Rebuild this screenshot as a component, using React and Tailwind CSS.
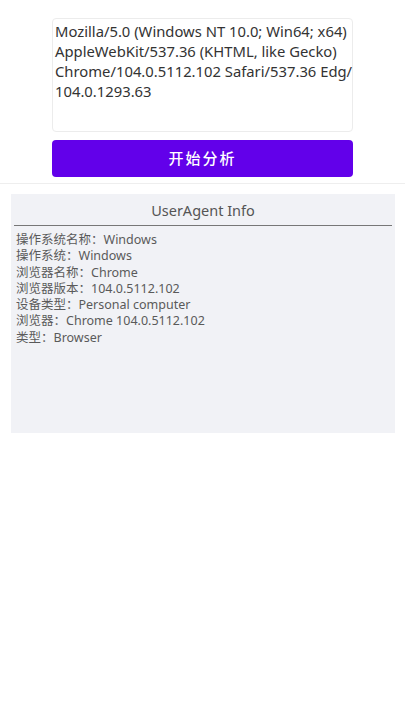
import React from "react";

export default function App() {
  const uaLines = [
    "Mozilla/5.0 (Windows NT 10.0; Win64; x64)",
    "AppleWebKit/537.36 (KHTML, like Gecko)",
    "Chrome/104.0.5112.102 Safari/537.36 Edg/",
    "104.0.1293.63",
  ];
  const rows = [
    "操作系统名称：Windows",
    "操作系统：Windows",
    "浏览器名称：Chrome",
    "浏览器版本：104.0.5112.102",
    "设备类型：Personal computer",
    "浏览器：Chrome 104.0.5112.102",
    "类型：Browser",
  ];
  return (
    <div
      className="w-[405px] h-[720px] bg-white flex flex-col"
      style={{ fontFamily: '"Noto Sans", "Noto Sans CJK SC", sans-serif' }}
    >
      <div className="flex flex-col items-center pt-[18px] pb-[6px] border-b border-[#eeeeee] h-[184px]">
        <div className="w-[301px] h-[114px] border border-[#ececec] rounded-[4px] px-[2px] pt-[2px] text-[14.8px] leading-[20px] text-[#333333] whitespace-nowrap">
          {uaLines.map((l) => (
            <div key={l}>{l}</div>
          ))}
        </div>
        <button className="mt-[8px] w-[301px] h-[37px] rounded-[4px] bg-[#6200ea] text-white text-[15px] font-medium tracking-[2px] flex items-center justify-center">
          开始分析
        </button>
      </div>
      <div className="mx-[11px] mt-[10px] h-[239px] w-[384px] bg-[#f1f2f6] flex flex-col">
        <div className="mx-[3px] h-[32px] pt-[3px] border-b border-[#777777] flex items-center justify-center text-[14.5px] text-[#555555]">
          UserAgent Info
        </div>
        <div className="px-[5px] pt-[6px] text-[12.5px] leading-[16.3px] text-[#5a5a5a]">
          {rows.map((r) => (
            <div key={r}>{r}</div>
          ))}
        </div>
      </div>
    </div>
  );
}
